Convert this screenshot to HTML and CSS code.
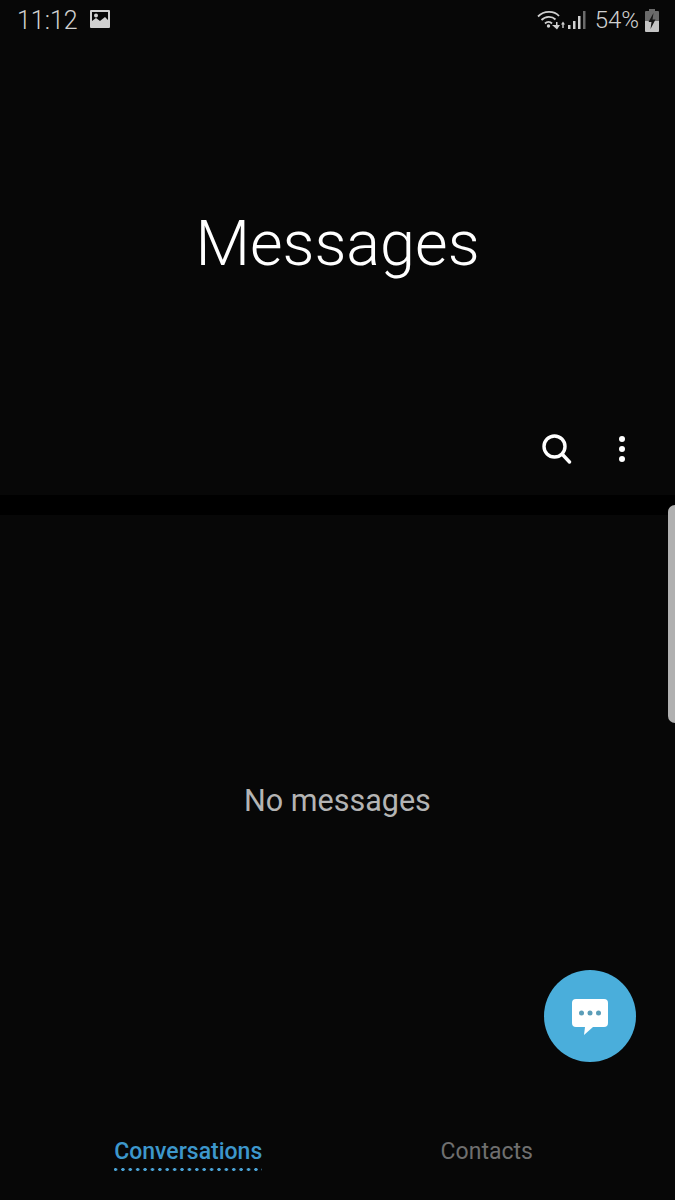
FILE: index.html
```html
<!DOCTYPE html>
<html lang="en">
<head>
    <meta charset="UTF-8">
    <meta name="viewport" content="width=device-width, initial-scale=1.0">
    <title>Messages</title>
    <link rel="stylesheet" href="styles.css">
</head>
<body>
    <div class="app">
        <div class="status-bar">
            <div class="status-left">
                <span class="time">11:12</span>
                <svg class="icon-picture" width="20" height="18" viewBox="0 0 20 18">
                    <path fill="#d0d0d0" fill-rule="evenodd" d="M1 0h18a1 1 0 0 1 1 1v16a1 1 0 0 1-1 1H1a1 1 0 0 1-1-1V1a1 1 0 0 1 1-1zM2 2v9l4-3 4 3 5-4 3 3V2z"/>
                    <circle cx="6" cy="5.500" r="2" fill="#d0d0d0"/>
                </svg>
            </div>
            <div class="status-right">
                <svg class="icon-wifi" width="28" height="20" viewBox="0 0 28 20">
                    <g fill="none" stroke="#d0d0d0" stroke-width="1.800">
                        <path d="M1 6.500C7 .5 17 .5 22 6"/>
                        <path d="M4.500 10C8.500 6 15 6 18.500 9.500"/>
                        <path d="M8 13.500C10 11.500 13 11.500 15 13.500"/>
                    </g>
                    <circle cx="11.500" cy="16" r="1.700" fill="#d0d0d0"/>
                    <path fill="#d0d0d0" d="M15 15h4v-3h1.500v3H23l-3 4.500zM24 14.500l2-3 2 3h-1.300V18h-1.400v-3.500z"/>
                </svg>
                <svg class="icon-signal" width="18" height="20" viewBox="0 0 18 20">
                    <rect x="0" y="15" width="2.500" height="4" fill="#d0d0d0"/>
                    <rect x="5" y="11" width="2.500" height="8" fill="#d0d0d0"/>
                    <rect x="10" y="6" width="2.500" height="13" fill="#d0d0d0"/>
                    <rect x="15" y="1" width="2.500" height="18" fill="#6a6a6a"/>
                </svg>
                <span class="battery-text">54%</span>
                <svg class="icon-battery" width="14" height="23" viewBox="0 0 14 23">
                    <path fill="#6a6a6a" d="M4 0h6v2h3a1 1 0 0 1 1 1v9H0V3a1 1 0 0 1 1-1h3z"/>
                    <path fill="#c4c4c4" d="M0 12h14v10a1 1 0 0 1-1 1H1a1 1 0 0 1-1-1z"/>
                    <path fill="#161616" d="M8.500 4 3.500 13h3l-1 7 5-9.500h-3z"/>
                </svg>
            </div>
        </div>

        <header class="app-header">
            <h1>Messages</h1>
            <div class="header-actions">
                <svg width="30" height="30" viewBox="0 0 30 30">
                    <circle cx="12.500" cy="12.500" r="10.500" fill="none" stroke="#fff" stroke-width="3.400"/>
                    <path d="M20.500 20.500 27.500 28" fill="none" stroke="#fff" stroke-width="3.400" stroke-linecap="round"/>
                </svg>
                <svg width="10" height="30" viewBox="0 0 10 30">
                    <circle cx="5" cy="5" r="3" fill="#fff"/>
                    <circle cx="5" cy="15" r="3" fill="#fff"/>
                    <circle cx="5" cy="25" r="3" fill="#fff"/>
                </svg>
            </div>
        </header>

        <div class="divider"></div>

        <main class="content">
            <p>No messages</p>
        </main>

        <nav class="tabs">
            <div class="tab"><span class="tab-active">Conversations</span></div>
            <div class="tab"><span>Contacts</span></div>
        </nav>

        <div class="edge-handle"></div>

        <button class="fab">
            <svg width="38" height="38" viewBox="0 0 38 38">
                <path fill="#fff" d="M5 2h28a4 4 0 0 1 4 4v20a4 4 0 0 1-4 4H22l-9 8 1-8H5a4 4 0 0 1-4-4V6a4 4 0 0 1 4-4z"/>
                <circle cx="10.500" cy="16" r="2.500" fill="#5b9db8"/>
                <circle cx="19" cy="16" r="2.500" fill="#5b9db8"/>
                <circle cx="27.500" cy="16" r="2.500" fill="#5b9db8"/>
            </svg>
        </button>
    </div>
</body>
</html>
```

FILE: styles.css
```css
body {
    margin: 0;
    background-color: #070707;
    font-family: 'Roboto', 'Liberation Sans', sans-serif;
}

.app {
    position: relative;
    width: 675px;
    height: 1200px;
    overflow: hidden;
    display: flex;
    flex-direction: column;
    background-color: #070707;
}

.status-bar {
    height: 40px;
    flex-shrink: 0;
    display: flex;
    justify-content: space-between;
    align-items: center;
    padding: 0 16px 0 17px;
    color: #d0d0d0;
    font-size: 25px;
    font-weight: 300;
}

.status-left,
.status-right {
    display: flex;
    align-items: center;
}

.icon-picture {
    margin-left: 12px;
    margin-top: -2px;
}

.icon-signal {
    margin-left: 3px;
}

.battery-text {
    margin-left: 9px;
    font-size: 24px;
}

.icon-battery {
    margin-left: 6px;
}

.app-header {
    height: 455px;
    flex-shrink: 0;
    display: flex;
    flex-direction: column;
    align-items: center;
}

.app-header h1 {
    margin: 0;
    padding-top: 163px;
    font-size: 63px;
    line-height: 82px;
    font-weight: 300;
    color: #fff;
}

.header-actions {
    align-self: flex-end;
    margin-top: 149px;
    padding-right: 48px;
    display: flex;
    align-items: center;
    gap: 45px;
}

.divider {
    height: 20px;
    flex-shrink: 0;
    background-color: #000;
}

.content {
    flex-grow: 1;
    display: flex;
    align-items: center;
    justify-content: center;
}

.content p {
    margin: 0;
    font-size: 30.500px;
    color: #b4b4b4;
}

.tabs {
    height: 115px;
    flex-shrink: 0;
    padding: 51px 39px 0;
    box-sizing: border-box;
    display: grid;
    grid-template-columns: 1fr 1fr;
    align-items: start;
}

.tab {
    text-align: center;
    font-size: 23px;
    line-height: 32px;
    color: #6f6f6f;
}

.tab-active {
    display: inline-block;
    color: #3d97cc;
    font-weight: 500;
    padding-bottom: 3px;
    background-image: radial-gradient(circle, #4aa3d6 1.500px, transparent 1.800px);
    background-size: 7.400px 3px;
    background-repeat: repeat-x;
    background-position: -2.200px bottom;
}

.edge-handle {
    position: absolute;
    right: 0;
    top: 505px;
    width: 7px;
    height: 218px;
    background-color: #b0b0b0;
    border-radius: 7px 0 0 7px;
}

.fab {
    position: absolute;
    left: 544px;
    top: 970px;
    width: 92px;
    height: 92px;
    padding: 0;
    border: none;
    border-radius: 50%;
    background-color: #4aaedb;
    display: flex;
    align-items: center;
    justify-content: center;
}
```
